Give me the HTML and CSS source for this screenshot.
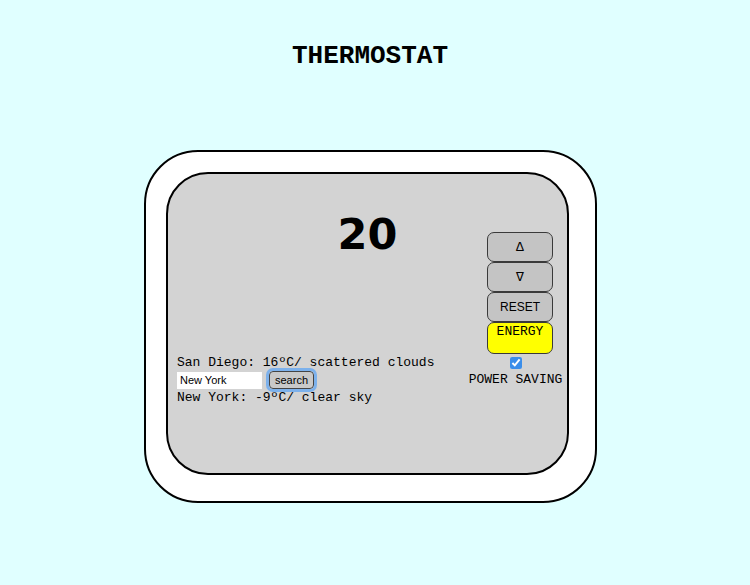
FILE: index.html
```html
<!DOCTYPE html>
<html>
<head>
<meta charset="utf-8">
<link rel="stylesheet" href="styles.css">
</head>
<body>
<h1 class="title">THERMOSTAT</h1>
<div class="device">
  <div class="screen">
    <div class="temp">20</div>
    <div class="controls">
      <button class="btn">&#8710;</button>
      <button class="btn">&#8711;</button>
      <button class="btn btn-sans">RESET</button>
      <button class="btn btn-energy">ENERGY</button>
      <input class="check" type="checkbox" checked>
      <div class="label">POWER SAVING</div>
    </div>
    <div class="weather">
      <div class="line">San Diego: 16ºC/ scattered clouds</div>
      <div class="search-row">
        <input class="city" type="text" value="New York">
        <button class="search">search</button>
      </div>
      <div class="line">New York: -9ºC/ clear sky</div>
    </div>
  </div>
</div>
</body>
</html>
```

FILE: styles.css
```css
html, body {
  margin: 0;
  padding: 0;
}
body {
  background: #e0ffff;
  font-family: "Liberation Mono", "Courier New", monospace;
  color: #000;
}
.title {
  margin: 41px 0 0 0;
  padding-right: 10px;
  font-size: 26px;
  font-weight: bold;
  text-align: center;
  line-height: 30px;
}
.device {
  box-sizing: border-box;
  width: 453px;
  height: 353px;
  margin: 79px 0 0 144px;
  background: #fff;
  border: 2px solid #000;
  border-radius: 54px;
  padding: 20px 0 0 20px;
}
.screen {
  box-sizing: border-box;
  width: 403px;
  height: 303px;
  background: #d3d3d3;
  border: 2px solid #000;
  border-radius: 42px;
  padding: 35px 5px 0 9px;
  display: grid;
  grid-template-columns: 1fr 93px;
  grid-template-rows: auto 1fr;
}
.temp {
  grid-column: 1 / -1;
  grid-row: 1;
  text-align: center;
  font-family: "DejaVu Sans", sans-serif;
  font-weight: bold;
  font-size: 43px;
  line-height: 51px;
  margin-left: -9px;
  margin-right: -5px;
}
.controls {
  grid-column: 2;
  grid-row: 1 / 3;
  margin-top: 23px;
  display: flex;
  flex-direction: column;
  align-items: center;
}
.btn {
  box-sizing: border-box;
  align-self: flex-start;
  margin: 0 0 0 18px;
  width: 66px;
  height: 30px;
  padding: 0;
  background: #c4c4c4;
  border: 1px solid #3a3a3a;
  border-radius: 7px;
  font-family: "Liberation Mono", monospace;
  font-size: 13px;
  color: #000;
}
.btn-sans {
  font-family: "Liberation Sans", Arial, sans-serif;
  font-size: 12px;
}
.btn-energy {
  height: 32px;
  background: #ffff00;
  padding-bottom: 13px;
  font-size: 13px;
}
.check {
  width: 12px;
  height: 12px;
  margin: 3px 0 3px 0;
  accent-color: #3b8eea;
}
.label {
  font-size: 13px;
  line-height: 15px;
  white-space: nowrap;
}
.weather {
  grid-column: 1;
  grid-row: 2;
  align-self: start;
  margin-top: 95px;
  font-size: 13px;
  line-height: 15px;
}
.search-row {
  display: flex;
  align-items: center;
  gap: 7px;
  height: 20px;
}
.city {
  box-sizing: border-box;
  width: 85px;
  height: 17px;
  border: none;
  padding: 0 3px;
  background: #fff;
  font-family: "Liberation Sans", Arial, sans-serif;
  font-size: 11px;
}
.search {
  box-sizing: border-box;
  height: 18px;
  padding: 0 5px;
  background: #c9c9c9;
  border: 1px solid #444;
  border-radius: 4px;
  outline: 3px solid #7cb1ec;
  font-family: "Liberation Sans", Arial, sans-serif;
  font-size: 11px;
}
.line {
  white-space: nowrap;
}
```
